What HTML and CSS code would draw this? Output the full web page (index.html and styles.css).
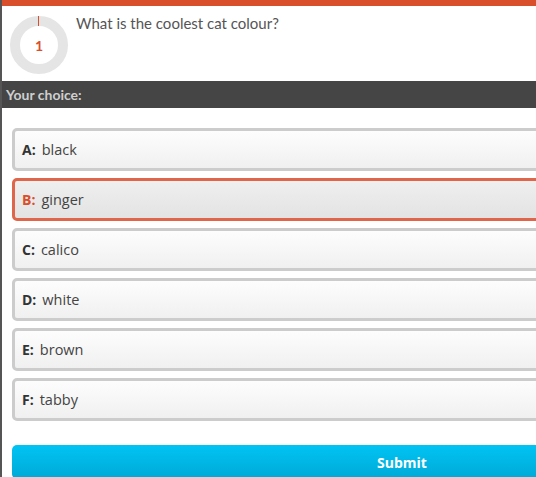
FILE: index.html
```
<!DOCTYPE html>
<html>
<head>
<meta charset="utf-8">
<link rel="stylesheet" href="styles.css">
</head>
<body>
<div class="viewport">
<div class="page">
  <div class="topbar"></div>
  <div class="header">
    <div class="timer">
      <span class="tick"></span>
      <span class="num">1</span>
    </div>
    <div class="question">What is the coolest cat colour?</div>
  </div>
  <div class="choicebar">Your choice:</div>
  <div class="options">
    <div class="option"><b class="key">A:</b><span>black</span></div>
    <div class="option selected"><b class="key">B:</b><span>ginger</span></div>
    <div class="option"><b class="key">C:</b><span>calico</span></div>
    <div class="option"><b class="key">D:</b><span>white</span></div>
    <div class="option"><b class="key">E:</b><span>brown</span></div>
    <div class="option"><b class="key">F:</b><span>tabby</span></div>
    <button class="submit">Submit</button>
  </div>
</div>
</div>
</body>
</html>
```
FILE: styles.css
```
html, body {
  margin: 0;
  padding: 0;
  background: #fff;
  overflow: hidden;
}
.viewport {
  width: 536px;
  height: 477px;
  overflow: hidden;
}
.page {
  width: 790px;
  min-height: 477px;
  border-left: 2px solid #555;
  font-family: "Open Sans", sans-serif;
  color: #333;
}
.topbar {
  height: 6px;
  background: #d94e2b;
}
.header {
  height: 75px;
  display: flex;
  align-items: flex-start;
  padding-left: 8px;
}
.timer {
  position: relative;
  margin-top: 10px;
  width: 38px;
  height: 38px;
  border: 10px solid #e5e5e5;
  border-radius: 50%;
  display: flex;
  align-items: center;
  justify-content: center;
  flex-shrink: 0;
}
.tick {
  position: absolute;
  top: -10px;
  left: 18px;
  width: 1px;
  height: 10px;
  background: #d94e2b;
}
.num {
  font-family: Lato, sans-serif;
  font-weight: 700;
  font-size: 14px;
  color: #d94e2b;
  margin-top: 1px;
}
.question {
  margin-left: 8px;
  margin-top: 8px;
  font-family: Lato, sans-serif;
  font-size: 15px;
  color: #555;
}
.choicebar {
  height: 27px;
  background: #454545;
  color: #cfcfcf;
  font-family: Lato, sans-serif;
  font-weight: 700;
  font-size: 14px;
  line-height: 27px;
  padding-left: 4px;
}
.options {
  padding: 20px 0 0 10px;
  display: flex;
  flex-direction: column;
  gap: 7px;
}
.option {
  height: 37px;
  border: 3px solid #cccccc;
  border-radius: 5px;
  background: linear-gradient(#fdfdfd, #f0f0f0);
  display: flex;
  align-items: center;
  gap: 6px;
  padding-left: 7px;
  font-size: 14.5px;
  color: #444;
}
.option .key {
  font-weight: 700;
  font-size: 14px;
  color: #333;
}
.option.selected {
  border-color: #df664a;
  background: linear-gradient(#efefef, #e3e3e3);
}
.option.selected .key {
  color: #d94e2b;
}
.submit {
  margin-top: 17px;
  height: 34px;
  border: none;
  border-radius: 5px;
  background: linear-gradient(#00c4f4, #00a9d6);
  color: #fff;
  font-family: "Open Sans", sans-serif;
  font-weight: 700;
  font-size: 14px;
  padding: 0;
}
```
